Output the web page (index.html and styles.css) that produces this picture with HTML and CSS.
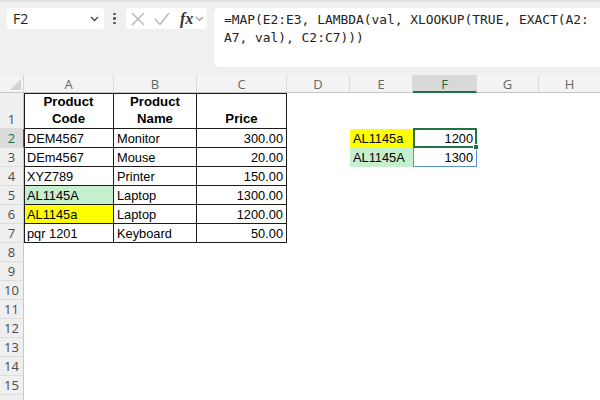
FILE: index.html
```html
<!DOCTYPE html>
<html>
<head>
<meta charset="utf-8">
<link rel="stylesheet" href="styles.css">
</head>
<body>
<div class="app">
  <div class="toolbar">
    <div class="namebox">
      <span class="nb-text">F2</span>
      <svg class="nb-chev" width="9" height="6" viewBox="0 0 9 6"><path d="M1 1 L4.5 4.5 L8 1" fill="none" stroke="#444" stroke-width="1.3"/></svg>
    </div>
    <div class="dots"><i></i><i></i><i></i></div>
    <div class="fnbox">
      <svg class="ic-x" width="14" height="14" viewBox="0 0 14 14"><path d="M1 1 L13 13 M13 1 L1 13" stroke="#b4b4b4" stroke-width="1.3" fill="none"/></svg>
      <svg class="ic-ok" width="16" height="14" viewBox="0 0 16 14"><path d="M1 7 L6 12.5 L15 1" stroke="#b4b4b4" stroke-width="1.3" fill="none"/></svg>
      <span class="fx">fx</span>
      <svg class="fx-chev" width="9" height="6" viewBox="0 0 9 6"><path d="M1 1 L4.5 4.5 L8 1" fill="none" stroke="#9a9a9a" stroke-width="1.2"/></svg>
    </div>
    <div class="formula">=MAP(E2:E3, LAMBDA(val, XLOOKUP(TRUE, EXACT(A2:<br>A7, val), C2:C7)))</div>
  </div>

  <div class="sheet">
    <div class="corner"><svg width="13" height="13" viewBox="0 0 13 13"><path d="M12 1 L12 12 L1 12 Z" fill="#d3d3d3"/></svg></div>
    <div class="colh">A</div>
    <div class="colh">B</div>
    <div class="colh">C</div>
    <div class="colh">D</div>
    <div class="colh">E</div>
    <div class="colh sel">F</div>
    <div class="colh">G</div>
    <div class="colh last">H</div>

    <div class="rowh tall">1</div>
    <div class="t tl head first">Product<br>Code</div>
    <div class="t tl head">Product<br>Name</div>
    <div class="t tl head">Price</div>
    <div class="c"></div><div class="c"></div><div class="c"></div><div class="c"></div><div class="c"></div>

    <div class="rowh selr">2</div>
    <div class="t first">DEM4567</div>
    <div class="t">Monitor</div>
    <div class="t num">300.00</div>
    <div class="c"></div>
    <div class="c yellow">AL1145a</div>
    <div class="c num active">1200<span class="handle"></span></div>
    <div class="c"></div><div class="c"></div>

    <div class="rowh">3</div>
    <div class="t first">DEm4567</div>
    <div class="t">Mouse</div>
    <div class="t num">20.00</div>
    <div class="c"></div>
    <div class="c green">AL1145A</div>
    <div class="c num spill">1300</div>
    <div class="c"></div><div class="c"></div>

    <div class="rowh">4</div>
    <div class="t first">XYZ789</div>
    <div class="t">Printer</div>
    <div class="t num">150.00</div>
    <div class="rest"></div>

    <div class="rowh">5</div>
    <div class="t first green">AL1145A</div>
    <div class="t">Laptop</div>
    <div class="t num">1300.00</div>
    <div class="rest"></div>

    <div class="rowh">6</div>
    <div class="t first yellow">AL1145a</div>
    <div class="t">Laptop</div>
    <div class="t num">1200.00</div>
    <div class="rest"></div>

    <div class="rowh">7</div>
    <div class="t first">pqr 1201</div>
    <div class="t">Keyboard</div>
    <div class="t num">50.00</div>
    <div class="rest"></div>

    <div class="rowh">8</div><div class="blank"></div>
    <div class="rowh">9</div><div class="blank"></div>
    <div class="rowh">10</div><div class="blank"></div>
    <div class="rowh">11</div><div class="blank"></div>
    <div class="rowh">12</div><div class="blank"></div>
    <div class="rowh">13</div><div class="blank"></div>
    <div class="rowh">14</div><div class="blank"></div>
    <div class="rowh">15</div><div class="blank"></div>
    <div class="rowh">16</div><div class="blank"></div>
  </div>
</div>
</body>
</html>
```

FILE: styles.css
```css
* { box-sizing: border-box; }
html, body {
  margin: 0;
  padding: 0;
  width: 600px;
  height: 400px;
  overflow: hidden;
  background: #ffffff;
}
.app {
  width: 600px;
  height: 400px;
  overflow: hidden;
}

/* ---------- formula bar ---------- */
.toolbar {
  height: 75px;
  background: #f0f0f0;
  border-top: 2px solid #e2e2e2;
  padding: 6px 0 0 7px;
  display: flex;
  align-items: flex-start;
}
.namebox {
  width: 97px;
  height: 21px;
  background: #fff;
  border-radius: 4px;
  display: flex;
  align-items: center;
  justify-content: space-between;
  padding: 0 5px 0 6px;
  font-family: "Open Sans", "Noto Sans", sans-serif;
  font-size: 14px;
  color: #222;
}
.nb-chev { margin-top: 1px; }
.dots {
  width: 21px;
  height: 21px;
  display: flex;
  flex-direction: column;
  align-items: center;
  justify-content: center;
  gap: 2px;
}
.dots i {
  display: block;
  width: 2.5px;
  height: 2.5px;
  border-radius: 50%;
  background: #555;
}
.fnbox {
  margin-left: 1px;
  width: 81px;
  height: 21px;
  background: #fff;
  border-radius: 4px;
  display: flex;
  align-items: center;
  padding-left: 5px;
}
.ic-x { margin-right: 9px; }
.ic-ok { margin-right: 10px; }
.fx {
  font-family: "Liberation Serif", "DejaVu Serif", serif;
  font-style: italic;
  font-weight: bold;
  font-size: 16px;
  color: #333;
  margin-right: 2px;
  line-height: 1;
}
.fx-chev { margin-top: 1px; }
.formula {
  margin-left: 7px;
  flex: 1;
  height: 59px;
  background: #fff;
  border-radius: 5px 0 0 5px;
  padding: 3px 0 0 10px;
  font-family: "DejaVu Sans Mono", "Liberation Mono", monospace;
  font-size: 12.9px;
  line-height: 18px;
  color: #222;
  white-space: nowrap;
  overflow: hidden;
}

/* ---------- sheet grid ---------- */
.sheet {
  display: grid;
  grid-template-columns: 24px 90px 83px 90px 63px 63px 64px 62px 1fr;
  grid-template-rows: 18px 36px;
  grid-auto-rows: 19px;
  font-family: "Liberation Sans", Arial, sans-serif;
  font-size: 12.8px;
  color: #000;
}
.corner {
  background: #f3f3f3;
  border-right: 1px solid #d4d4d4;
  border-bottom: 1px solid #c6c6c6;
  display: flex;
  align-items: flex-end;
  justify-content: flex-end;
  padding: 0 1px 1px 0;
}
.colh {
  background: #f3f3f3;
  border-right: 1px solid #dadada;
  border-bottom: 1px solid #c6c6c6;
  display: flex;
  align-items: center;
  justify-content: center;
  font-family: "Open Sans", "Noto Sans", sans-serif;
  font-size: 13px;
  color: #666;
}
.colh.sel {
  background: #d9d9d9;
  color: #1e6b43;
  border-bottom: 2px solid #217346;
  padding-top: 1px;
}
.colh.last { border-right: none; }

.rowh {
  grid-column: 1;
  background: #efefef;
  border-right: 1px solid #c6c6c6;
  border-bottom: 1px solid #dddddd;
  display: flex;
  align-items: center;
  justify-content: center;
  font-family: "Open Sans", "Noto Sans", sans-serif;
  font-size: 13px;
  color: #4a4a4a;
}
.rowh.tall {
  align-items: flex-end;
  padding-bottom: 0;
}
.rowh.selr {
  background: #dcdcdc;
  color: #1e6b43;
  border-right: 1px solid #217346;
}

.t, .c {
  display: flex;
  align-items: center;
  padding: 0 3px;
  white-space: nowrap;
  overflow: visible;
  position: relative;
}
.t {
  border-right: 1px solid #1c1c1c;
  border-bottom: 1px solid #1c1c1c;
}
.t.first { border-left: 1px solid #1c1c1c; padding-left: 2px; }
.t.tl {
  border-top: 1px solid #1c1c1c;
  font-weight: bold;
  font-size: 13.2px;
  line-height: 17px;
  text-align: center;
  justify-content: center;
  align-items: flex-end;
  padding-bottom: 1px;
}
.num { justify-content: flex-end; padding-right: 3px; }
.yellow { background: #ffff00; }
.green { background: #c6efce; }

.active {
  border: 2px solid #217346;
  padding-right: 2px;
  margin-top: -1px;
}
.handle {
  position: absolute;
  right: -4px;
  bottom: -4px;
  width: 6px;
  height: 6px;
  background: #217346;
  border: 1px solid #fff;
  z-index: 2;
}
.spill {
  border: 1px solid #5b8fd9;
  border-top: none;
}
.rest { grid-column: 5 / -1; }
.blank { grid-column: 2 / -1; }
```
